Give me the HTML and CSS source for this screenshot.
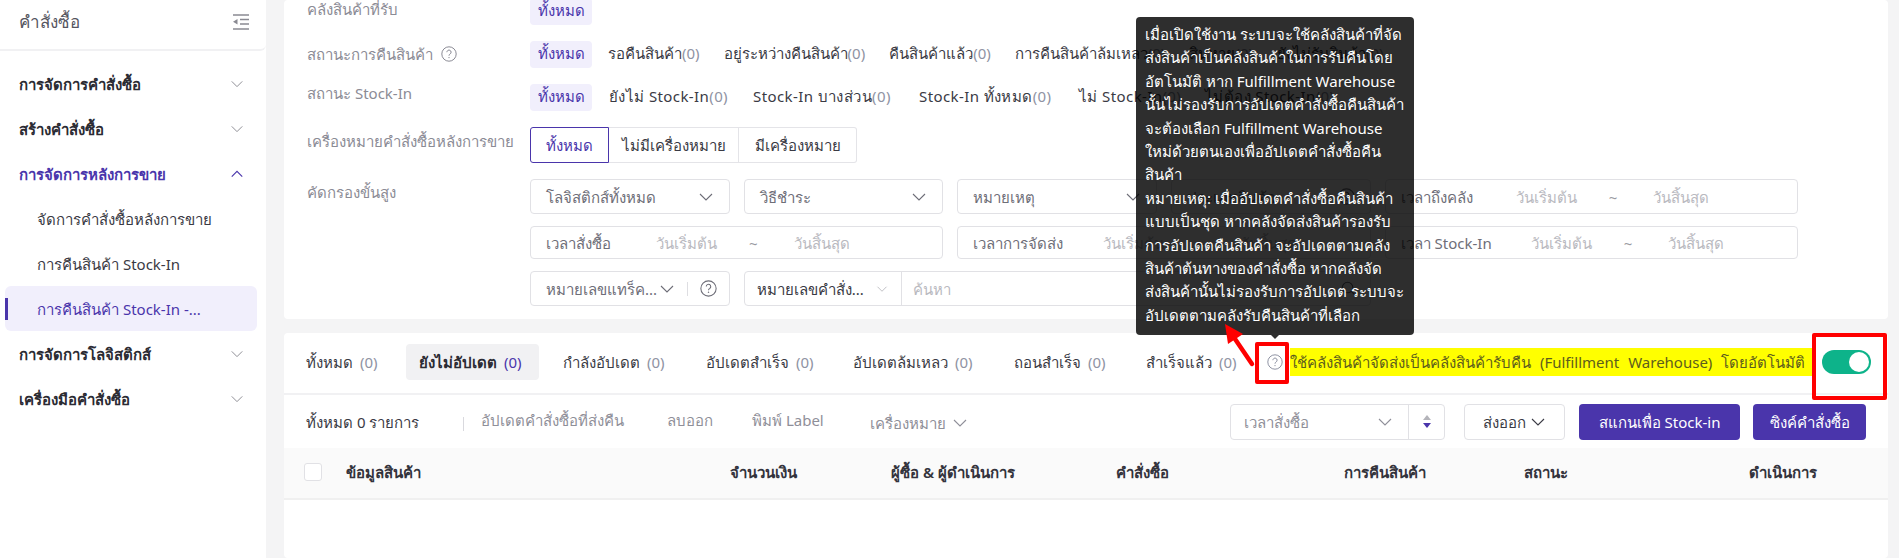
FILE: index.html
```html
<!DOCTYPE html>
<html lang="th">
<head>
<meta charset="utf-8">
<title>การคืนสินค้า Stock-In</title>
<link rel="stylesheet" href="styles.css">
</head>
<body>
<svg class="sprite" width="0" height="0" aria-hidden="true">
  <symbol id="chev" viewBox="0 0 16 16"><path d="M2 5l6 6 6-6" fill="none" stroke="currentColor" stroke-width="1.1"/></symbol>
  <symbol id="chev-up" viewBox="0 0 16 16"><path d="M2 11l6-6 6 6" fill="none" stroke="currentColor" stroke-width="1.3"/></symbol>
  <symbol id="help" viewBox="0 0 16 16"><circle cx="8" cy="8" r="7.2" fill="none" stroke="currentColor" stroke-width="1"/><path d="M5.9 6.2a2.1 2.1 0 1 1 3.3 1.7c-.8.5-1.2.9-1.2 1.8" fill="none" stroke="currentColor" stroke-width="1"/><circle cx="8" cy="11.6" r=".7" fill="currentColor"/></symbol>
  <symbol id="search" viewBox="0 0 16 16"><circle cx="7" cy="7" r="5.6" fill="none" stroke="currentColor" stroke-width="1.1"/><path d="M11 11l4 4" stroke="currentColor" stroke-width="1.1"/></symbol>
</svg>
<div class="app">
  <aside class="sidebar">
    <div class="side-head">
      <span class="side-title">คำสั่งซื้อ</span>
      <svg class="collapse" width="16" height="16" viewBox="0 0 16 16"><path d="M0 1h16M7 5.5h9M7 10h9M0 15h16" stroke="#8a8a92" stroke-width="1.4" fill="none"/><path d="M0 7.7L4.5 5v5.4z" fill="#8a8a92"/></svg>
    </div>
    <nav class="menu">
      <div class="menu-group"><span>การจัดการคำสั่งซื้อ</span><svg class="menu-chev"><use href="#chev"/></svg></div>
      <div class="menu-group"><span>สร้างคำสั่งซื้อ</span><svg class="menu-chev"><use href="#chev"/></svg></div>
      <div class="menu-group is-open"><span>การจัดการหลังการขาย</span><svg class="menu-chev"><use href="#chev-up"/></svg></div>
      <div class="menu-item">จัดการคำสั่งซื้อหลังการขาย</div>
      <div class="menu-item">การคืนสินค้า Stock-In</div>
      <div class="menu-item is-active">การคืนสินค้า Stock-In -...</div>
      <div class="menu-group"><span>การจัดการโลจิสติกส์</span><svg class="menu-chev"><use href="#chev"/></svg></div>
      <div class="menu-group"><span>เครื่องมือคำสั่งซื้อ</span><svg class="menu-chev"><use href="#chev"/></svg></div>
    </nav>
  </aside>

  <main class="main">
    <section class="panel filters">
      <div class="frow frow-first">
        <div class="flabel">คลังสินค้าที่รับ</div>
        <div class="chips"><span class="chip is-on">ทั้งหมด</span></div>
      </div>
      <div class="frow">
        <div class="flabel flabel-help">สถานะการคืนสินค้า <svg class="help-sm"><use href="#help"/></svg></div>
        <div class="chips">
          <span class="chip is-on">ทั้งหมด</span>
          <span class="chip">รอคืนสินค้า<i>(0)</i></span>
          <span class="chip">อยู่ระหว่างคืนสินค้า<i>(0)</i></span>
          <span class="chip">คืนสินค้าแล้ว<i>(0)</i></span>
          <span class="chip">การคืนสินค้าล้มเหลว<i>(0)</i></span>
          <span class="chip">สินหาย<i>(0)</i></span>
          <span class="chip">ยังไม่รับสินค้า<i>(0)</i></span>
        </div>
      </div>
      <div class="frow">
        <div class="flabel">สถานะ Stock-In</div>
        <div class="chips chips-stock">
          <span class="chip is-on">ทั้งหมด</span>
          <span class="chip">ยังไม่ Stock-In<i>(0)</i></span>
          <span class="chip">Stock-In บางส่วน<i>(0)</i></span>
          <span class="chip">Stock-In ทั้งหมด<i>(0)</i></span>
          <span class="chip">ไม่ Stock-In<i>(0)</i></span>
          <span class="chip">ไม่ต้อง Stock-In<i>(0)</i></span>
        </div>
      </div>
      <div class="frow">
        <div class="flabel flabel-seg">เครื่องหมายคำสั่งซื้อหลังการขาย</div>
        <div class="seg">
          <span class="seg-btn seg-a is-on">ทั้งหมด</span>
          <span class="seg-btn seg-b">ไม่มีเครื่องหมาย</span>
          <span class="seg-btn seg-c">มีเครื่องหมาย</span>
        </div>
      </div>
      <div class="frow frow-adv">
        <div class="flabel flabel-adv">คัดกรองขั้นสูง</div>
        <div class="adv">
          <div class="field"><span>โลจิสติกส์ทั้งหมด</span><svg class="fchev"><use href="#chev"/></svg></div>
          <div class="field"><span>วิธีชำระ</span><svg class="fchev"><use href="#chev"/></svg></div>
          <div class="field"><span>หมายเหตุ</span><svg class="fchev"><use href="#chev"/></svg></div>
          <div class="field"><span>ประเภทสินค้า</span><svg class="help-field"><use href="#help"/></svg></div>
          <div class="field field-range span2 r-arrive"><span>เวลาถึงคลัง</span><em>วันเริ่มต้น</em><b>~</b><em>วันสิ้นสุด</em></div>
          <div class="field field-range span2 r-order"><span>เวลาสั่งซื้อ</span><em>วันเริ่มต้น</em><b>~</b><em>วันสิ้นสุด</em></div>
          <div class="field field-range span2 r-ship"><span>เวลาการจัดส่ง</span><em>วันเริ่มต้น</em><b>~</b><em>วันสิ้นสุด</em></div>
          <div class="field field-range span2 r-stock"><span>เวลา Stock-In</span><em>วันเริ่มต้น</em><b>~</b><em>วันสิ้นสุด</em></div>
          <div class="field field-track"><span>หมายเลขแทร็ค...</span><svg class="fchev fchev-track"><use href="#chev"/></svg><u></u><svg class="help-field"><use href="#help"/></svg></div>
          <div class="field field-search span3"><div class="search-type"><span>หมายเลขคำสั่ง...</span><svg class="fchev-light"><use href="#chev"/></svg></div><em>ค้นหา</em><svg class="search-ico"><use href="#search"/></svg></div>
        </div>
      </div>
    </section>

    <section class="panel list">
      <div class="tabs">
        <div class="tablist">
          <span class="tab">ทั้งหมด <i>(0)</i></span>
          <span class="tab is-on">ยังไม่อัปเดต <i>(0)</i></span>
          <span class="tab">กำลังอัปเดต <i>(0)</i></span>
          <span class="tab">อัปเดตสำเร็จ <i>(0)</i></span>
          <span class="tab">อัปเดตล้มเหลว <i>(0)</i></span>
          <span class="tab">ถอนสำเร็จ <i>(0)</i></span>
          <span class="tab">สำเร็จแล้ว <i>(0)</i></span>
        </div>
        <div class="auto">
          <svg class="help-tab"><use href="#help"/></svg>
          <span class="mark">ใช้คลังสินค้าจัดส่งเป็นคลังสินค้ารับคืน (Fulfillment Warehouse) โดยอัตโนมัติ</span>
          <span class="switch"></span>
        </div>
      </div>
      <div class="toolbar">
        <span class="count">ทั้งหมด 0 รายการ</span>
        <span class="tsep"></span>
        <div class="tacts">
          <span class="tact">อัปเดตคำสั่งซื้อที่ส่งคืน</span>
          <span class="tact">ลบออก</span>
          <span class="tact">พิมพ์ Label</span>
          <span class="tact tact-mark">เครื่องหมาย <svg class="tchev"><use href="#chev"/></svg></span>
        </div>
        <div class="tright">
          <div class="sort">
            <span>เวลาสั่งซื้อ</span><svg class="fchev"><use href="#chev"/></svg>
            <div class="updown"><s class="up"></s><s class="down"></s></div>
          </div>
          <button class="btn btn-line">ส่งออก <svg class="tchev"><use href="#chev"/></svg></button>
          <button class="btn btn-pri btn-scan">สแกนเพื่อ Stock-in</button>
          <button class="btn btn-pri btn-sync">ซิงค์คำสั่งซื้อ</button>
        </div>
      </div>
      <div class="thead">
        <span class="check"></span>
        <span>ข้อมูลสินค้า</span>
        <span>จำนวนเงิน</span>
        <span>ผู้ซื้อ &amp; ผู้ดำเนินการ</span>
        <span>คำสั่งซื้อ</span>
        <span>การคืนสินค้า</span>
        <span>สถานะ</span>
        <span>ดำเนินการ</span>
      </div>
    </section>
  </main>
</div>

<div class="tooltip">เมื่อเปิดใช้งาน ระบบจะใช้คลังสินค้าที่จัด<br>ส่งสินค้าเป็นคลังสินค้าในการรับคืนโดย<br>อัตโนมัติ หาก Fulfillment Warehouse<br>นั้นไม่รองรับการอัปเดตคำสั่งซื้อคืนสินค้า<br>จะต้องเลือก Fulfillment Warehouse<br>ใหม่ด้วยตนเองเพื่ออัปเดตคำสั่งซื้อคืน<br>สินค้า<br>หมายเหตุ: เมื่ออัปเดตคำสั่งซื้อคืนสินค้า<br>แบบเป็นชุด หากคลังจัดส่งสินค้ารองรับ<br>การอัปเดตคืนสินค้า จะอัปเดตตามคลัง<br>สินค้าต้นทางของคำสั่งซื้อ หากคลังจัด<br>ส่งสินค้านั้นไม่รองรับการอัปเดต ระบบจะ<br>อัปเดตตามคลังรับคืนสินค้าที่เลือก</div>
<div class="redbox redbox-help"></div>
<div class="redbox redbox-switch"></div>
<svg class="redarrow" width="40" height="50" viewBox="0 0 40 50"><path d="M30 42L11 14" stroke="#f00" stroke-width="4.5" stroke-linecap="round" fill="none"/><path d="M3 2L21 12L6 22z" fill="#f00"/></svg>
</body>
</html>
```

FILE: styles.css
```css
* { box-sizing: border-box; }
html, body { margin: 0; height: 100%; overflow: hidden; }
body {
  position: relative;
  width: 1899px;
  height: 558px;
  background: #f4f4f5;
  color: #3a3a44;
  font-family: "Noto Sans", "Open Sans", sans-serif;
  font-size: 15px;
  line-height: 22px;
}
.sprite { position: absolute; }
i { font-style: normal; color: #8f93a3; }
em { font-style: normal; }
s { text-decoration: none; }
u { text-decoration: none; }

.app { display: flex; height: 558px; }

/* sidebar */
.sidebar { width: 266px; flex: none; background: #fff; }
.side-head {
  height: 51px;
  display: flex;
  align-items: center;
  justify-content: space-between;
  padding: 0 17px 5px 19px;
  border-bottom: 2px solid #f1f1f3;
  border-radius: 0 0 6px 0;
}
.side-title { font-size: 17px; color: #55555f; }
.collapse { width: 16px; height: 16px; }
.menu { padding-top: 10px; }
.menu-group, .menu-item {
  height: 45px;
  display: flex;
  align-items: center;
  justify-content: space-between;
}
.menu-group { padding: 0 22px 0 19px; font-weight: 600; color: #2b2b33; }
.menu-group.is-open { color: #4a35ab; }
.menu-chev { width: 14px; height: 14px; color: #8a8a92; }
.is-open .menu-chev { color: #4a35ab; }
.menu-item { padding-left: 37px; color: #3a3a44; }
.menu-item.is-active {
  margin: 0 9px 0 5px;
  padding-left: 32px;
  background: #f1effc;
  border-radius: 6px;
  color: #4a35ab;
  position: relative;
}
.menu-item.is-active::before {
  content: "";
  position: absolute;
  left: 0;
  top: 12px;
  width: 3px;
  height: 22px;
  background: #4a35ab;
}

/* main */
.main { flex: 1; min-width: 0; padding: 0 11px 0 18px; display: flex; flex-direction: column; gap: 14px; }
.panel { background: #fff; border-radius: 4px; }
.filters {
  height: 319px;
  padding: 0 0 0 23px;
  display: flex;
  flex-direction: column;
  gap: 16px;
}
.frow { display: flex; align-items: flex-start; }
.frow-first { margin-top: -2px; }
.flabel { width: 223px; flex: none; color: #8b8b95; margin-top: -2px; white-space: nowrap; }
.frow-first .flabel { margin-top: 0; }
.flabel-help { display: flex; align-items: center; gap: 8px; padding-top: 4px; }
.flabel-seg { padding-top: 5px; }
.flabel-adv { padding-top: 4px; }
.help-sm { width: 16px; height: 16px; color: #8b8b95; }

.chips { display: flex; gap: 8px; height: 27px; white-space: nowrap; }
.chips-stock { display: grid; grid-template-columns: 71px 144px 166px 160px 126px auto; gap: 0; justify-items: start; }
.chips-stock .chip:not(.is-on) { letter-spacing: .4px; }
.chip { padding: 0 8px; height: 27px; line-height: 25px; color: #3a3a44; border-radius: 4px; }
.chip.is-on { width: 62px; padding: 0; text-align: center; background: #f1effc; color: #4a35ab; }

.seg { display: flex; height: 36px; }
.seg-btn {
  display: flex; align-items: center; justify-content: center;
  border: 1px solid #e4e4e8; border-left: 0; color: #3a3a44;
}
.seg-a { width: 79px; }
.seg-b { width: 130px; }
.seg-c { width: 118px; border-radius: 0 3px 3px 0; }
.seg-btn.is-on { border: 1px solid #4a35ab; color: #4a35ab; border-radius: 3px 0 0 3px; }

.adv {
  width: 1268px;
  display: grid;
  grid-template-columns: repeat(6, 1fr);
  grid-template-rows: 35px 33px 35px;
  column-gap: 14px;
  row-gap: 12px;
}
.span2 { grid-column: span 2; }
.span3 { grid-column: span 3; }
.field {
  display: flex; align-items: center; justify-content: space-between;
  border: 1px solid #e1e1e5; border-radius: 4px; padding: 0 15px;
  color: #6e6e78; white-space: nowrap; overflow: hidden;
}
.fchev { width: 16px; height: 16px; color: #6e6e78; flex: none; }
.field-range { justify-content: flex-start; }
.field-range em { color: #b9b9c0; }
.field-range b { font-weight: 400; color: #9a9aa2; }
.r-order em:nth-of-type(1) { margin-left: 45px; }
.r-ship em:nth-of-type(1) { margin-left: 40px; }
.r-arrive em:nth-of-type(1) { margin-left: 43px; }
.r-stock em:nth-of-type(1) { margin-left: 39px; }
.field-range b { margin-left: 32px; }
.field-range b + em { margin-left: 36px; }
.field-track { padding: 0 8px 0 15px; justify-content: flex-start; }
.fchev-track { margin-left: 2px; }
.field-track u { width: 1px; height: 14px; background: #dedee2; margin: 0 12px 0 12px; flex: none; }
.help-field { width: 17px; height: 17px; color: #6e6e78; flex: none; }
.field-search { padding: 0 14px 0 0; justify-content: flex-start; }
.search-type {
  width: 157px; height: 100%; flex: none;
  display: flex; align-items: center; justify-content: space-between;
  padding: 0 13px 0 12px; border-right: 1px solid #e1e1e5; color: #3a3a44;
}
.fchev-light { width: 12px; height: 12px; color: #b4b4ba; flex: none; }
.field-search em { margin-left: 11px; color: #b9b9c0; flex: 1; }
.search-ico { width: 15px; height: 15px; color: #6e6e78; flex: none; }

/* list */
.list { flex: 1; }
.tabs {
  height: 62px;
  display: flex;
  align-items: center;
  padding: 0 17px 2px 9px;
  border-bottom: 2px solid #f1f1f3;
  white-space: nowrap;
}
.tablist { display: grid; grid-template-columns: 113px 144px 143px 147px 161px 132px 120px; justify-items: start; }
.tab { height: 36px; padding: 0 13px; line-height: 36px; color: #3a3a44; border-radius: 4px; word-spacing: 3px; }
.tab.is-on { width: 133px; background: #f1f1f3; font-weight: 600; color: #2b2b33; }
.tab.is-on i { color: #4a35ab; font-weight: 400; }
.auto { margin-left: auto; display: flex; align-items: center; }
.help-tab { width: 16px; height: 16px; color: #8f93a3; margin-right: 7px; flex: none; }
.mark { width: 522px; height: 28px; line-height: 28px; background: #ffff00; color: #5d5d1e; word-spacing: 5px; }
.switch {
  position: relative;
  width: 49px; height: 24px; margin-left: 10px;
  background: #0db38a; border-radius: 12px; flex: none;
}
.switch::after {
  content: ""; position: absolute; right: 2px; top: 2px;
  width: 20px; height: 20px; background: #fff; border-radius: 50%;
}

.toolbar { height: 53px; display: flex; align-items: center; padding: 0 22px; white-space: nowrap; }
.count { width: 122px; color: #3a3a44; }
.tsep { width: 1px; height: 14px; background: #d9d9de; margin: 4px 17px 0 35px; }
.tacts { display: grid; grid-template-columns: 186px 85px 118px auto; }
.tact { color: #8f8f99; }
.tact-mark { display: flex; align-items: center; margin-top: 3px; gap: 6px; }
.tchev { width: 16px; height: 16px; color: currentColor; }
.tright { margin-left: auto; display: flex; align-items: center; }
.sort {
  width: 215px; height: 36px; display: flex; align-items: center;
  border: 1px solid #e1e1e5; border-radius: 4px; padding-left: 13px; color: #8f8f99;
}
.sort span { flex: 1; }
.sort .fchev { margin-right: 15px; color: #8f8f99; }
.updown { width: 36px; height: 100%; border-left: 1px solid #e1e1e5; display: flex; flex-direction: column; align-items: center; justify-content: center; gap: 3px; }
.up, .down { width: 0; height: 0; border-left: 4px solid transparent; border-right: 4px solid transparent; }
.up { border-bottom: 5px solid #b4b4ba; }
.down { border-top: 5px solid #4a35ab; }
.btn { height: 36px; border-radius: 4px; font: inherit; cursor: pointer; display: flex; align-items: center; justify-content: center; white-space: nowrap; }
.btn-line { width: 101px; margin-left: 19px; background: #fff; border: 1px solid #e1e1e5; color: #3a3a44; gap: 4px; }
.btn-pri { background: #4a35ab; border: 0; color: #fff; }
.btn-scan { width: 161px; margin-left: 14px; }
.btn-sync { width: 113px; margin-left: 13px; }

.thead {
  height: 52px;
  display: grid;
  grid-template-columns: 42px 384px 161px 225px 228px 180px 225px 1fr;
  align-items: center;
  padding: 0 0 2px 20px;
  background: #fafafa;
  border-bottom: 2px solid #f0f0f0;
  font-weight: 600;
  color: #33333c;
}
.check { width: 18px; height: 18px; background: #fff; border: 1px solid #e1e1e5; border-radius: 3px; }

/* overlays */
.tooltip {
  position: absolute;
  left: 1136px; top: 17px;
  width: 278px; height: 318px;
  padding: 6px 9px;
  background: rgba(0, 0, 0, .82);
  color: #fff;
  border-radius: 4px;
  line-height: 23.4px;
  white-space: nowrap;
}
.tooltip::after {
  content: ""; position: absolute; left: 135px; bottom: -4px;
  border-left: 4px solid transparent; border-right: 4px solid transparent;
  border-top: 4px solid rgba(0, 0, 0, .82);
}
.redbox { position: absolute; border: 4px solid #f00; border-radius: 2px; }
.redbox-help { left: 1255px; top: 342px; width: 34px; height: 42px; }
.redbox-switch { left: 1812px; top: 333px; width: 75px; height: 67px; }
.redarrow { position: absolute; left: 1222px; top: 322px; }
```
